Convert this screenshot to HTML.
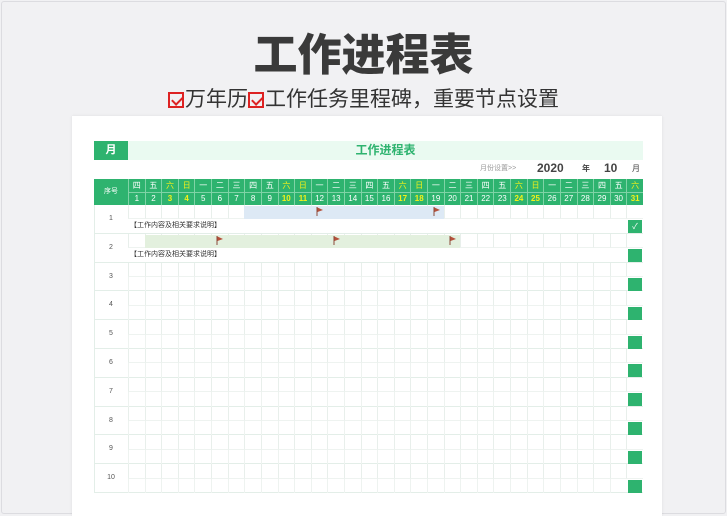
<!DOCTYPE html><html><head><meta charset="utf-8"><style>
*{margin:0;padding:0;box-sizing:border-box}
body{width:727px;height:515px;background:#f1f1f3;position:relative;overflow:hidden;font-family:"Liberation Sans","Noto Sans CJK SC",sans-serif}
.a{position:absolute}
#t{left:0;width:727px;top:30px;text-align:center;font-size:44px;font-weight:900;color:#3a3a3a;line-height:52px}
#s{left:0;width:727px;top:87px;text-align:center;font-size:21px;color:#333;line-height:26px}
.cb{display:inline-block;width:16px;height:16px;border:2px solid #d22;position:relative;vertical-align:-2px;margin-right:1px}
.cb:after{content:"";position:absolute;left:4px;top:0px;width:5px;height:9px;border:solid #d22;border-width:0 2px 2px 0;transform:rotate(45deg)}
#card{left:72px;top:116px;width:590px;height:400px;background:#fff;box-shadow:0 0 3px rgba(0,0,0,.08)}
.c{position:absolute;text-align:center;font-size:8px;line-height:13px;color:#fff}
</style></head><body>
<div class="a" style="left:1px;top:1px;width:725px;height:513px;border:1px solid #dcdce0;border-radius:3px"></div>
<div class="a" id="t">工作进程表</div>
<div class="a" id="s"><span class="cb"></span>万年历<span class="cb"></span>工作任务里程碑，重要节点设置</div>
<div class="a" id="card"></div>
<div class="a" style="left:94px;top:141px;width:34px;height:19px;background:#2eb36f;color:#fff;font-size:11px;font-weight:bold;line-height:19px;text-align:center">月</div>
<div class="a" style="left:128px;top:141px;width:515px;height:19px;background:#eafaf1;color:#2eb36f;font-size:12px;font-weight:bold;line-height:19px;text-align:center">工作进程表</div>
<div class="a" style="left:480px;top:163px;font-size:7px;color:#999;line-height:12px">月份设置>></div>
<div class="a" style="left:537px;top:161px;font-size:12px;font-weight:bold;color:#444;line-height:14px">2020</div>
<div class="a" style="left:582px;top:163px;font-size:8px;color:#444;font-weight:bold;line-height:12px">年</div>
<div class="a" style="left:604px;top:161px;font-size:12px;font-weight:bold;color:#444;line-height:14px">10</div>
<div class="a" style="left:632px;top:163px;font-size:8px;color:#444;line-height:12px">月</div>
<div id="g"></div>
<script>
var h='';var W=515/31,X=128;
h+='<div class="a" style="left:94px;top:179px;width:549px;height:26px;background:#2eb36f"></div>';
h+='<div class="c" style="left:94px;top:185px;width:34px;font-size:7px">序号</div>';
var wd=['四','五','六','日','一','二','三'];
for(var i=0;i<31;i++){var x=X+i*W,w=wd[i%7],we=(w=='六'||w=='日');
h+='<div class="c" style="left:'+x+'px;top:179px;width:'+W+'px;border-left:1px solid #7fd3a6;border-bottom:1px solid #7fd3a6;color:'+(we?'#f3f018':'#fff')+'">'+w+'</div>';
h+='<div class="c" style="left:'+x+'px;top:192px;width:'+W+'px;border-left:1px solid #7fd3a6;color:'+(we?'#f3f018':'#fff')+';font-weight:'+(we?'bold':'normal')+'">'+(i+1)+'</div>';}
var R=28.8,T=205;
for(var r=0;r<10;r++){var y=T+r*R;
h+='<div class="a" style="left:94px;top:'+y+'px;width:549px;height:'+R+'px;border-bottom:1px solid #e3eee8"></div>';
h+='<div class="c" style="left:94px;top:'+(y+7)+'px;width:34px;color:#555;font-size:7px">'+(r+1)+'</div>';
for(var i=0;i<31;i++){var x=X+i*W;h+='<div class="a" style="left:'+x+'px;top:'+y+'px;width:'+W+'px;height:'+R/2+'px;border-left:1px solid #e8efeb;border-bottom:1px solid #eef3f0"></div>';}
if(r>=2)for(var i=0;i<30;i++){var x=X+i*W;h+='<div class="a" style="left:'+x+'px;top:'+(y+R/2)+'px;width:'+W+'px;height:'+R/2+'px;border-left:1px solid #eef3f0"></div>';}
h+='<div class="a" style="left:628px;top:'+(y+R/2+1)+'px;width:14px;height:13px;background:#2eb36f;color:#fff;font-size:8px;line-height:13px;text-align:center">'+(r==0?'✓':'')+'</div>';
}
h+='<div class="a" style="left:94px;top:205px;width:1px;height:288px;background:#e3eee8"></div>';
h+='<div class="a" style="left:244px;top:206px;width:200px;height:13px;background:#dde9f5"></div>';
h+='<div class="a" style="left:145px;top:235px;width:315px;height:13px;background:#e3f0de"></div>';
h+='<div class="a" style="left:130px;top:220px;width:300px;height:12px;background:#fff;font-size:7px;line-height:12px;color:#333">【工作内容及相关要求说明】</div>';
h+='<div class="a" style="left:130px;top:249px;width:300px;height:12px;background:#fff;font-size:7px;line-height:12px;color:#333">【工作内容及相关要求说明】</div>';
function f(x,y){return '<svg class="a" style="left:'+x+'px;top:'+y+'px" width="8" height="9"><line x1="1" y1="0" x2="1" y2="9" stroke="#8a4a3a"/><path d="M1.5 0.5L7 3L1.5 5Z" fill="#b5503a"/></svg>';}
h+=f(316,207)+f(433,207)+f(216,236)+f(333,236)+f(449,236);
document.getElementById('g').innerHTML=h;
</script>
</body></html>
